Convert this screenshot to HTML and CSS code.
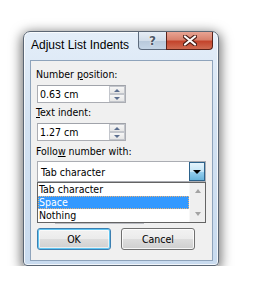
FILE: index.html
```html
<!DOCTYPE html>
<html lang="en">
<head>
  <meta charset="UTF-8" />
  <title>Adjust List Indents</title>
  <link rel="stylesheet" href="styles.css">
</head>
<body>
  <div class="window">
    <div class="titlebar">
      <span class="title">Adjust List Indents</span>
      <div class="caption-buttons">
        <div class="cap help">?</div>
        <div class="cap close">
          <svg width="14" height="11" viewBox="0 0 14 11">
            <path d="M2 1.5 L12 9.5 M12 1.5 L2 9.5" stroke="#4b1d16" stroke-width="4.2" stroke-linecap="round"/>
            <path d="M2 1.5 L12 9.5 M12 1.5 L2 9.5" stroke="#ffffff" stroke-width="2.2" stroke-linecap="round"/>
          </svg>
        </div>
      </div>
    </div>

    <div class="client">
      <label class="field-label">Number <u>p</u>osition:</label>
      <div class="spin">
        <span class="spin-value">0.63 cm</span>
        <div class="spin-arrows">
          <div class="spin-btn"><span class="arrow-up"></span></div>
          <div class="spin-btn"><span class="arrow-down"></span></div>
        </div>
      </div>

      <label class="field-label"><u>T</u>ext indent:</label>
      <div class="spin">
        <span class="spin-value">1.27 cm</span>
        <div class="spin-arrows">
          <div class="spin-btn"><span class="arrow-up"></span></div>
          <div class="spin-btn"><span class="arrow-down"></span></div>
        </div>
      </div>

      <label class="field-label label-follow">Follo<u>w</u> number with:</label>
      <div class="combo-wrap">
        <div class="combo">
          <span class="combo-value">Tab character</span>
          <div class="combo-btn"><span class="combo-arrow"></span></div>
        </div>

        <!-- controls hidden behind the open drop-down -->
        <div class="hidden-row">
          <div class="hidden-box"></div>
        </div>

        <div class="dropdown">
          <ul class="dropdown-items">
            <li>Tab character</li>
            <li class="selected">Space</li>
            <li>Nothing</li>
          </ul>
          <div class="scrollbar">
            <span class="sb-up"></span>
            <span class="sb-down"></span>
          </div>
        </div>
      </div>

      <div class="buttons">
        <button class="btn default">OK</button>
        <button class="btn">Cancel</button>
      </div>
    </div>
  </div>
</body>
</html>
```

FILE: styles.css
```css
body {
  margin: 0;
  background: #ffffff;
  font-family: "DejaVu Sans Condensed", "DejaVu Sans", sans-serif;
  font-size: 10.5px;
  color: #000;
}

.window {
  margin: 31px 0 0 23px;
  width: 196px;
  height: 235px;
  box-sizing: border-box;
  border: 1px solid #5b6674;
  border-radius: 7px 7px 4px 4px;
  background: linear-gradient(to bottom, #e4eef9 0%, #d3e2f2 40%, #c9dbef 100%);
  box-shadow: inset 0 0 0 1px rgba(255,255,255,0.75), 0 3px 12px 2px rgba(0,0,0,0.55);
  padding: 0 5px 4px 6px;
  display: flex;
  flex-direction: column;
}

/* Title bar */
.titlebar {
  height: 28px;
  flex-shrink: 0;
  display: flex;
  align-items: flex-start;
  justify-content: space-between;
}

.title {
  font-family: "Liberation Sans", Arial, sans-serif;
  font-size: 12px;
  padding: 6px 0 0 1px;
  color: #000;
}

.caption-buttons {
  display: flex;
}

.cap {
  height: 18px;
  box-sizing: border-box;
  border: 1px solid #5d6b7d;
  border-top: none;
  display: flex;
  align-items: center;
  justify-content: center;
}

.help {
  width: 28px;
  border-radius: 0 0 0 4px;
  border-right: none;
  background: linear-gradient(to bottom, #e6edf5 0%, #d2dde9 50%, #b7c8da 51%, #c5d5e6 100%);
  font-family: "DejaVu Sans", sans-serif;
  font-weight: bold;
  font-size: 12px;
  color: #4d5866;
  text-shadow: 0 0 2px #fff, 0 0 1px #fff;
}

.close {
  width: 47px;
  border-color: #5a2219;
  border-radius: 0 0 4px 0;
  background: linear-gradient(to bottom, #e8a493 0%, #d8826e 45%, #c4442c 55%, #cf6b52 100%);
}

/* Client area */
.client {
  flex: 1;
  box-sizing: border-box;
  border: 1px solid #8ea3bb;
  background: #f0f0f0;
  padding: 7px 6px 9px 6px;
  display: flex;
  flex-direction: column;
}

.field-label {
  display: block;
  line-height: 13px;
  margin-left: -1px;
}

.spin {
  margin-top: 4px;
  margin-bottom: 3px;
  width: 89px;
  height: 18px;
  box-sizing: border-box;
  border: 1px solid #abadb3;
  border-top-color: #a0a3aa;
  background: #fff;
  display: flex;
  align-items: center;
}

.spin-value {
  flex: 1;
  padding-left: 2px;
  line-height: 14px;
}

.spin-arrows {
  width: 16px;
  height: 16px;
  display: flex;
  flex-direction: column;
}

.spin-btn {
  flex: 1;
  box-sizing: border-box;
  border: 1px solid #c3c6cc;
  background: linear-gradient(to bottom, #f6f6f6, #e6e6e6);
  display: flex;
  align-items: center;
  justify-content: center;
}

.arrow-up,
.arrow-down {
  width: 0;
  height: 0;
  border-left: 3px solid transparent;
  border-right: 3px solid transparent;
}

.arrow-up {
  border-bottom: 3px solid #5b6e8f;
}

.arrow-down {
  border-top: 3px solid #5b6e8f;
}

.label-follow {
  margin-top: 1px;
}

/* Combo box + open list */
.combo-wrap {
  position: relative;
  margin-top: 3px;
}

.combo {
  height: 21px;
  box-sizing: border-box;
  border: 1px solid #abadb3;
  background: #fff;
  display: flex;
  align-items: center;
}

.combo-value {
  flex: 1;
  padding-left: 3px;
}

.combo-btn {
  width: 16px;
  height: 19px;
  box-sizing: border-box;
  border: 1px solid #2c628b;
  background: linear-gradient(to bottom, #e5f4fc 0%, #c4e5f6 50%, #98d1ef 51%, #68b3db 100%);
  display: flex;
  align-items: center;
  justify-content: center;
}

.combo-arrow {
  width: 0;
  height: 0;
  border-left: 4px solid transparent;
  border-right: 4px solid transparent;
  border-top: 4px solid #000;
}

.hidden-row {
  height: 46px;
  box-sizing: border-box;
  padding-top: 22px;
}

.hidden-box {
  margin-left: 18px;
  width: 89px;
  height: 20px;
  box-sizing: border-box;
  border: 1px solid #b8bac0;
  background: #fff;
}

.dropdown {
  position: absolute;
  left: 0;
  right: 0;
  top: 21px;
  height: 41px;
  box-sizing: border-box;
  border: 1px solid #646464;
  background: #fff;
  display: flex;
}

.dropdown-items {
  list-style: none;
  margin: 0;
  padding: 0;
  flex: 1;
}

.dropdown-items li {
  height: 13px;
  line-height: 13px;
  padding-left: 1px;
  box-sizing: border-box;
}

.dropdown-items li.selected {
  background: #3399ff;
  color: #fff;
  outline: 1px dotted #e8b27a;
  outline-offset: -1px;
}

.scrollbar {
  width: 15px;
  background: #efefef;
  border-left: 1px solid #f8f8f8;
  display: flex;
  flex-direction: column;
  justify-content: space-between;
  align-items: center;
  padding: 6px 0 6px;
}

.sb-up,
.sb-down {
  width: 0;
  height: 0;
  border-left: 3.5px solid transparent;
  border-right: 3.5px solid transparent;
}

.sb-up {
  border-bottom: 4px solid #a3a3a3;
}

.sb-down {
  border-top: 4px solid #a3a3a3;
}

/* Dialog buttons */
.buttons {
  display: flex;
  gap: 10px;
}

.btn {
  width: 74px;
  height: 22px;
  font-family: inherit;
  font-size: inherit;
  color: #000;
  border: 1px solid #707070;
  border-radius: 3px;
  background: linear-gradient(to bottom, #f2f2f2 0%, #ebebeb 50%, #dddddd 51%, #cfcfcf 100%);
  box-shadow: inset 0 0 0 1px rgba(255,255,255,0.8);
  padding: 0;
}

.btn.default {
  border-color: #3c7fb1;
  box-shadow: inset 0 0 0 1px #62c6f2, inset 0 0 0 2px rgba(255,255,255,0.6);
}
```
